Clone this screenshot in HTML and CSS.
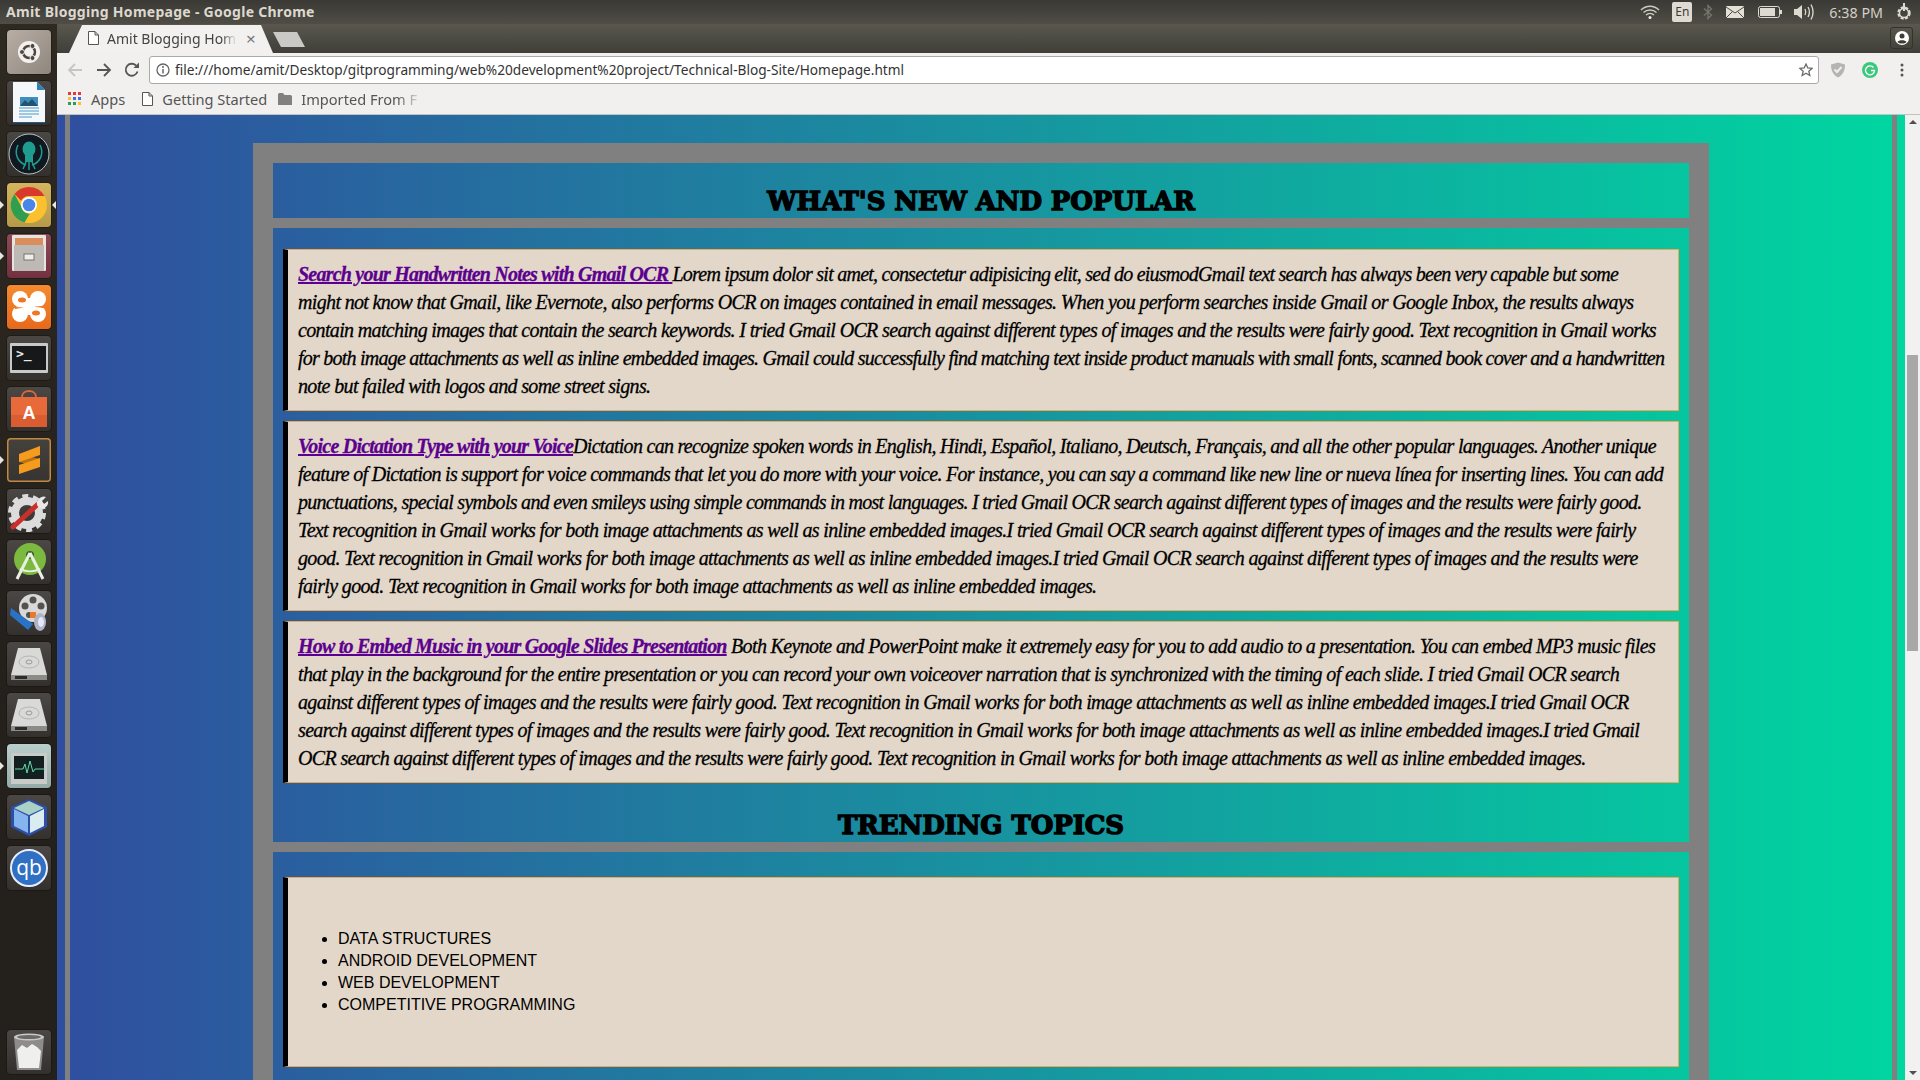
FILE: index.html
```html
<!DOCTYPE html>
<html lang="en">
<head>
  <meta charset="UTF-8">
  <title>Amit Blogging Homepage - Google Chrome</title>
  <link rel="stylesheet" href="styles.css">
</head>
<body>
  <div class="topbar">
    <div class="win-title">Amit Blogging Homepage - Google Chrome</div>
    <div class="tray">
      <svg class="tray-wifi" width="20" height="16" viewBox="0 0 20 16"><g fill="none" stroke="#cfcbc2" stroke-width="1.4"><path d="M1 6c5-5 13-5 18 0"/><path d="M3.5 8.6c3.6-3.4 9.4-3.4 13 0"/><path d="M6 11c2.300-2 5.700-2 8 0"/></g><circle cx="10" cy="13.500" r="1.500" fill="#eee"/></svg>
      <span class="tray-lang">En</span>
      <svg class="tray-bt" width="10" height="16" viewBox="0 0 10 16"><path d="M1 4.500 8.500 11 5 14.500V1.500L8.500 5 1 11.500" fill="none" stroke="#77756d" stroke-width="1.300"/></svg>
      <svg class="tray-mail" width="18" height="12" viewBox="0 0 18 12"><rect width="18" height="12" rx="1" fill="#e4e0d8"/><path d="M0 1l9 6 9-6M0 12l6.500-6.500M18 12l-6.500-6.500" fill="none" stroke="#4a4841"/></svg>
      <svg class="tray-batt" width="24" height="12" viewBox="0 0 24 12"><rect x=".5" y=".5" width="21" height="11" rx="2" fill="none" stroke="#dedad2"/><rect x="2" y="2" width="15" height="8" fill="#dedad2"/><rect x="22" y="4" width="2" height="4" fill="#dedad2"/></svg>
      <svg class="tray-vol" width="20" height="18" viewBox="0 0 20 18"><path d="M0 6h3l5-4v14l-5-4H0z" fill="#dedad2"/><g fill="none" stroke="#dedad2" stroke-width="1.300"><path d="M11 6c1 2 1 4 0 6"/><path d="M14 4c1.700 3 1.700 7 0 10"/><path d="M17 1.500c2.500 4.500 2.500 10.500 0 15"/></g></svg>
      <span class="tray-time">6:38 PM</span>
      <svg class="tray-power" width="16" height="18" viewBox="0 0 16 18"><circle cx="8" cy="10" r="5.500" fill="none" stroke="#dedad2" stroke-width="2.400" stroke-dasharray="3 1.400"/><circle cx="8" cy="10" r="4.500" fill="none" stroke="#dedad2" stroke-width="1.400"/><rect x="7" y="0" width="2" height="8" fill="#dedad2"/></svg>
    </div>
  </div>

  <div class="desktop">
    <nav class="launcher">
      <div class="tile tile-ubuntu"><svg width="44" height="44" viewBox="0 0 44 44"><circle cx="22" cy="22" r="11" fill="#f3f1ef"/><circle cx="22" cy="22" r="6" fill="none" stroke="#4d463f" stroke-width="2.500"/><g fill="#4d463f" stroke="#f3f1ef"><circle cx="15" cy="22" r="2.500"/><circle cx="25.500" cy="16" r="2.500"/><circle cx="25.500" cy="28" r="2.500"/></g></svg></div>
      <div class="tile"><svg width="44" height="44" viewBox="0 0 44 44"><path d="M6 1h24l8 8v33H6z" fill="#f4f8fb"/><path d="M30 1l8 8h-8z" fill="#2d7fb5"/><path d="M6 41h32v1H6z" fill="#1c5f8f"/><rect x="13" y="16" width="18" height="9" fill="#3d8fc0"/><path d="M13 25l5-6 3 3 4-4 6 7z" fill="#24536e"/><g stroke="#4a9ac8"><path d="M12 27h20M12 30h20M12 33h20M12 36h13"/></g></svg></div>
      <div class="tile"><svg width="44" height="44" viewBox="0 0 44 44"><circle cx="22" cy="22" r="20" fill="#10191f" stroke="#b9c2c4"/><g fill="#1f9c90"><ellipse cx="22" cy="17" rx="6.500" ry="7.500"/><rect x="18" y="22" width="8" height="8"/></g><g fill="none" stroke="#1f9c90" stroke-width="1.500"><path d="M11 13c-4 8-1 17 8 20M33 13c4 8 1 17-8 20"/><path d="M19 30l-3 7M22 30v8M25 30l3 7"/></g></svg></div>
      <div class="tile tile-chrome"><svg width="44" height="44" viewBox="0 0 44 44"><circle cx="22" cy="22" r="18" fill="#fbc02d"/><path d="M22 4a18 18 0 0 1 15.600 9H22a9 9 0 0 0-8 4.800L7.500 11A18 18 0 0 1 22 4z" fill="#d9392d"/><path d="M7.500 11l7 13a9 9 0 0 0 8 7l-5 8.500A18 18 0 0 1 7.500 11z" fill="#2f9e4f"/><circle cx="22" cy="22" r="8" fill="#fff"/><circle cx="22" cy="22" r="6.300" fill="#4a86e8"/></svg></div>
      <div class="tile tile-files"><svg width="44" height="44" viewBox="0 0 44 44"><rect x="5" y="1" width="34" height="36" rx="1" fill="#e6e4e1"/><rect x="8" y="4" width="28" height="7" fill="#d98e5c"/><rect x="7" y="11" width="30" height="26" fill="#bdbab6"/><rect x="17" y="20" width="10" height="6" fill="#f0eeec" stroke="#77736e"/></svg></div>
      <div class="tile tile-xampp"><svg width="44" height="44" viewBox="0 0 44 44"><g fill="#fff"><circle cx="13" cy="14" r="8"/><circle cx="31" cy="14" r="8"/><circle cx="13" cy="29" r="8"/><circle cx="31" cy="29" r="8"/><rect x="13" y="13" width="18" height="17"/></g><g fill="#f0761f"><ellipse cx="15" cy="15" rx="4" ry="2.500"/><ellipse cx="29" cy="28" rx="4" ry="2.500"/><path d="M8 22l9 .5-9 1.500zM36 21l-9 .5 9 1.500z"/></g></svg></div>
      <div class="tile"><svg width="44" height="44" viewBox="0 0 44 44"><rect x="3" y="7" width="38" height="30" rx="1" fill="#c9c9c7"/><rect x="5" y="10" width="34" height="24" fill="#17181a"/><text class="term-text" x="9" y="22">&gt;_</text></svg></div>
      <div class="tile"><svg width="44" height="44" viewBox="0 0 44 44"><path d="M15 10c0-8 14-8 14 0" fill="none" stroke="#d9683a" stroke-width="2"/><path d="M4 10h36v30H4z" fill="#e8693a"/><path d="M4 28h36v12H4z" fill="#d95d30"/><text class="soft-text" x="22" y="32">A</text></svg></div>
      <div class="tile tile-sublime"><svg width="44" height="44" viewBox="0 0 44 44"><path d="M12 16v8l21 5v-8z" fill="#b9720f"/><path d="M33 8v9l-21 7v-8z" fill="#f59b1f"/><path d="M33 20v9l-21 7v-9z" fill="#f59b1f"/></svg></div>
      <div class="tile"><svg width="44" height="44" viewBox="0 0 44 44"><circle cx="20" cy="24" r="12" fill="none" stroke="#dcdcdc" stroke-width="8"/><circle cx="20" cy="24" r="17" fill="none" stroke="#dcdcdc" stroke-width="4" stroke-dasharray="6 4.700"/><path d="M6 38l24-22" stroke="#c9302c" stroke-width="5" stroke-linecap="round"/><path d="M30 16c-1-6 5-10 9-8l-4 4 2 3 4-3c1 5-4 9-9 7z" fill="#e8e8e8"/></svg></div>
      <div class="tile"><svg width="44" height="44" viewBox="0 0 44 44"><circle cx="23" cy="19" r="16" fill="#7cb93f"/><circle cx="23" cy="15" r="4" fill="#3d5f2b"/><path d="M23 13L10 39M23 13l13 26" stroke="#e8f0e0" stroke-width="3"/><path d="M13 29c6 3 14 3 20 0" fill="none" stroke="#e8f0e0" stroke-width="2"/></svg></div>
      <div class="tile"><svg width="44" height="44" viewBox="0 0 44 44"><circle cx="26" cy="17" r="14" fill="#d8d8d8"/><g fill="#55514c"><circle cx="26" cy="9" r="3.500"/><circle cx="18" cy="15" r="3.500"/><circle cx="34" cy="15" r="3.500"/><circle cx="22" cy="24" r="3"/></g><path d="M4 17l22 16-5 6L3 24z" fill="#2a72c4"/><rect x="23" y="21" width="6" height="6" fill="#e8792b"/><ellipse cx="33" cy="31" rx="6" ry="9" fill="#aeb3c8"/><ellipse cx="34" cy="31" rx="3" ry="5" fill="#e4e8f8"/></svg></div>
      <div class="tile"><svg width="44" height="44" viewBox="0 0 44 44"><path d="M11 6h22l7 27H4z" fill="#d9d9d7"/><path d="M4 33h36v5H4z" fill="#8b8b88"/><path d="M8 34h12v3H8z" fill="#2b2b2b"/><ellipse cx="22" cy="20" rx="10" ry="6" fill="none" stroke="#b5b5b3"/><ellipse cx="22" cy="20" rx="3" ry="2" fill="none" stroke="#999"/></svg></div>
      <div class="tile"><svg width="44" height="44" viewBox="0 0 44 44"><path d="M11 6h22l7 27H4z" fill="#d9d9d7"/><path d="M4 33h36v5H4z" fill="#8b8b88"/><path d="M8 34h12v3H8z" fill="#2b2b2b"/><ellipse cx="22" cy="20" rx="10" ry="6" fill="none" stroke="#b5b5b3"/><ellipse cx="22" cy="20" rx="3" ry="2" fill="none" stroke="#999"/></svg></div>
      <div class="tile tile-monitor"><svg width="44" height="44" viewBox="0 0 44 44"><rect x="4" y="9" width="36" height="31" fill="#c9cbc9"/><rect x="7" y="12" width="30" height="23" fill="#12211f"/><path d="M8 25h8l2-5 2 9 3-12 3 11 2-3h10" fill="none" stroke="#62d9ae" stroke-width="1"/></svg></div>
      <div class="tile"><svg width="44" height="44" viewBox="0 0 44 44"><path d="M22 4l18 8v20l-18 9-18-9V12z" fill="#2c4fa8"/><path d="M22 6l15 7-15 7-15-7z" fill="#a9d2c5"/><path d="M7 14l14 7v17L7 31z" fill="#86b4ee"/><path d="M37 14l-14 7v17l14-7z" fill="#d9ecef"/></svg></div>
      <div class="tile"><svg width="44" height="44" viewBox="0 0 44 44"><circle cx="22" cy="22" r="18" fill="#2f6fc4" stroke="#e8eefc" stroke-width="2"/><text class="qb-text" x="22" y="29">qb</text></svg></div>
      <div class="launcher-fill"></div>
      <div class="tile"><svg width="44" height="44" viewBox="0 0 44 44"><path d="M7 7h30l-3 33H10z" fill="#8d8c8a"/><ellipse cx="22" cy="7" rx="15" ry="3.500" fill="#c9c9c7"/><ellipse cx="22" cy="7" rx="12" ry="2" fill="#6b6a68"/><path d="M10 20l5-5 5 3 5-4 5 3 4 4-2 17H12z" fill="#efefed"/></svg></div>
      <span class="pip pip-left pip-chrome"></span>
      <span class="pip pip-right pip-chrome"></span>
      <span class="pip pip-left pip-files"></span>
      <span class="pip pip-left pip-sublime"></span>
      <span class="pip pip-left pip-monitor"></span>
    </nav>

    <div class="browser">
      <div class="tabstrip">
        <div class="tab">
          <svg width="11" height="14" viewBox="0 0 11 14"><path d="M.5.500h6.500l3.500 3.500v9.500H.5zM7 .5V4h3.500" fill="#fff" stroke="#555"/></svg>
          <span class="tab-title">Amit Blogging Hom</span>
          <span class="tab-close">×</span>
        </div>
        <div class="newtab"></div>
        <div class="profile"><svg width="14" height="14" viewBox="0 0 14 14"><circle cx="7" cy="7" r="7" fill="#fff"/><circle cx="7" cy="5" r="2.500" fill="#3c3b36"/><path d="M2.500 11c1-2.500 8-2.500 9 0-2 2-7 2-9 0z" fill="#3c3b36"/></svg></div>
      </div>

      <div class="toolbar">
        <svg class="nav-btn" width="16" height="14" viewBox="0 0 16 14"><path d="M15 7H2M8 1L2 7l6 6" fill="none" stroke="#c6c5c3" stroke-width="1.800"/></svg>
        <svg class="nav-btn" width="16" height="14" viewBox="0 0 16 14"><path d="M1 7h13M8 1l6 6-6 6" fill="none" stroke="#555" stroke-width="1.800"/></svg>
        <svg class="nav-btn" width="16" height="16" viewBox="0 0 16 16"><path d="M13.500 9.500A6 6 0 1 1 12 3.500" fill="none" stroke="#555" stroke-width="1.800"/><path d="M9.500 6H15V.5z" fill="#555"/></svg>
        <div class="omnibox">
          <svg width="14" height="14" viewBox="0 0 14 14"><circle cx="7" cy="7" r="6" fill="none" stroke="#666" stroke-width="1.300"/><path d="M7 6v4.500" stroke="#666" stroke-width="1.500"/><circle cx="7" cy="4" r="1" fill="#666"/></svg>
          <span class="url">file:///home/amit/Desktop/gitprogramming/web%20development%20project/Technical-Blog-Site/Homepage.html</span>
          <svg width="14" height="14" viewBox="0 0 14 14"><path d="M7 1l1.800 4 4.200.4-3.200 2.800 1 4.300L7 10.200 3.200 12.500l1-4.300L1 5.400 5.200 5z" fill="none" stroke="#6b6b6b" stroke-width="1.300"/></svg>
        </div>
        <svg class="ext-shield" width="16" height="16" viewBox="0 0 16 16"><path d="M1 2.500L8 .5l7 2c0 6-2 10.500-7 13-5-2.500-7-7-7-13z" fill="#b4b4b4"/><path d="M4.500 7.500L7 10l4.500-5" fill="none" stroke="#eee" stroke-width="2"/></svg>
        <svg class="ext-grammarly" width="16" height="16" viewBox="0 0 16 16"><circle cx="8" cy="8" r="8" fill="#3bc87c"/><path d="M11.500 5.500A4.500 4.500 0 1 0 12.500 8.500H9" fill="none" stroke="#fff" stroke-width="1.300"/></svg>
        <svg class="ext-menu" width="4" height="14" viewBox="0 0 4 14"><g fill="#555"><circle cx="2" cy="2" r="1.500"/><circle cx="2" cy="7" r="1.500"/><circle cx="2" cy="12" r="1.500"/></g></svg>
      </div>

      <div class="bookmarks">
        <svg class="bm-apps" width="13" height="13" viewBox="0 0 13 13"><g><rect width="3" height="3" fill="#e53935"/><rect x="5" width="3" height="3" fill="#e53935"/><rect x="10" width="3" height="3" fill="#e53935"/><rect y="5" width="3" height="3" fill="#fbc02d"/><rect x="5" y="5" width="3" height="3" fill="#3f6fd8"/><rect x="10" y="5" width="3" height="3" fill="#3f6fd8"/><rect y="10" width="3" height="3" fill="#2f9e4f"/><rect x="5" y="10" width="3" height="3" fill="#2f9e4f"/><rect x="10" y="10" width="3" height="3" fill="#fbc02d"/></g></svg>
        <span class="bm-label bm-label-apps">Apps</span>
        <svg class="bm-page" width="11" height="14" viewBox="0 0 11 14"><path d="M.5.500h6.500l3.500 3.500v9.500H.5zM7 .5V4h3.500" fill="#fff" stroke="#555"/></svg>
        <span class="bm-label bm-label-start">Getting Started</span>
        <svg class="bm-folder" width="14" height="12" viewBox="0 0 14 12"><path d="M0 1.500A1.500 1.500 0 0 1 1.500 0H5l1.500 2h6A1.500 1.500 0 0 1 14 3.500V12H0z" fill="#808080"/></svg>
        <span class="bm-label bm-label-imported">Imported From F</span>
      </div>

      <div class="viewport">
        <div class="page">
          <div class="outer">
            <main class="frame">
              <header class="head">
                <h2>WHAT'S NEW AND POPULAR</h2>
              </header>
              <section class="block">
                <article class="post">
                  <a href="#">Search your Handwritten Notes with Gmail OCR </a><span class="tight">Lorem ipsum dolor sit amet, consectetur adipisicing elit, sed do eiusmodGmail text search has always been very capable but some</span><br>
                  might not know that Gmail, like Evernote, also performs OCR on images contained in email messages. When you perform searches inside Gmail or Google Inbox, the results always<br>
                  contain matching images that contain the search keywords. I tried Gmail OCR search against different types of images and the results were fairly good. Text recognition in Gmail works<br>
                  <span class="tight">for both image attachments as well as inline embedded images. Gmail could successfully find matching text inside product manuals with small fonts, scanned book cover and a handwritten</span><br>
                  note but failed with logos and some street signs.
                </article>
                <article class="post">
                  <a href="#">Voice Dictation Type with your Voice</a><span class="snug">Dictation can recognize spoken words in English, Hindi, Español, Italiano, Deutsch, Français, and all the other popular languages. Another unique</span><br>
                  <span class="snug">feature of Dictation is support for voice commands that let you do more with your voice. For instance, you can say a command like new line or nueva línea for inserting lines. You can add</span><br>
                  <span class="snug">punctuations, special symbols and even smileys using simple commands in most languages. I tried Gmail OCR search against different types of images and the results were fairly good.</span><br>
                  Text recognition in Gmail works for both image attachments as well as inline embedded images.I tried Gmail OCR search against different types of images and the results were fairly<br>
                  good. Text recognition in Gmail works for both image attachments as well as inline embedded images.I tried Gmail OCR search against different types of images and the results were<br>
                  fairly good. Text recognition in Gmail works for both image attachments as well as inline embedded images.
                </article>
                <article class="post">
                  <a href="#">How to Embed Music in your Google Slides Presentation</a> Both Keynote and PowerPoint make it extremely easy for you to add audio to a presentation. You can embed MP3 music files<br>
                  that play in the background for the entire presentation or you can record your own voiceover narration that is synchronized with the timing of each slide. I tried Gmail OCR search<br>
                  against different types of images and the results were fairly good. Text recognition in Gmail works for both image attachments as well as inline embedded images.I tried Gmail OCR<br>
                  search against different types of images and the results were fairly good. Text recognition in Gmail works for both image attachments as well as inline embedded images.I tried Gmail<br>
                  OCR search against different types of images and the results were fairly good. Text recognition in Gmail works for both image attachments as well as inline embedded images.
                </article>
                <h2 class="trending">TRENDING TOPICS</h2>
              </section>
              <section class="block block-topics">
                <div class="post post-topics">
                  <ul>
                    <li>DATA STRUCTURES</li>
                    <li>ANDROID DEVELOPMENT</li>
                    <li>WEB DEVELOPMENT</li>
                    <li>COMPETITIVE PROGRAMMING</li>
                  </ul>
                </div>
              </section>
            </main>
          </div>
        </div>
        <div class="scrollbar">
          <span class="arrow-up"></span>
          <div class="thumb"></div>
          <span class="arrow-down"></span>
        </div>
      </div>
    </div>
  </div>
</body>
</html>
```

FILE: styles.css
```css
* {
  box-sizing: border-box;
}
html, body {
  height: 100%;
}
body {
  margin: 0;
  overflow: hidden;
  display: flex;
  flex-direction: column;
  font-family: "Noto Sans", sans-serif;
  background-color: #24201c;
}

/* desktop top bar */
.topbar {
  height: 24px;
  flex: none;
  display: flex;
  align-items: center;
  justify-content: space-between;
  background: linear-gradient(#3a3935, #4f4d45);
}
.win-title {
  margin-left: 6px;
  padding-bottom: 2px;
  font-size: 14px;
  font-weight: 700;
  letter-spacing: 0.280px;
  color: #dcd8cf;
}
.tray {
  display: flex;
  align-items: center;
  color: #dcd8cf;
}
.tray-wifi { margin-right: 12px; }
.tray-lang {
  width: 20px;
  height: 20px;
  margin-right: 11px;
  border-radius: 2px;
  background-color: #dfdbd3;
  color: #3c3b37;
  font-size: 12px;
  line-height: 20px;
  text-align: center;
}
.tray-bt { margin-right: 13px; }
.tray-mail { margin-right: 14px; }
.tray-batt { margin-right: 12px; }
.tray-vol { margin-right: 15px; }
.tray-time {
  margin-right: 13px;
  font-size: 14.300px;
  color: #d4d0c8;
}
.tray-power { margin-right: 8px; }

.desktop {
  flex: 1;
  min-height: 0;
  display: flex;
}

/* launcher */
.launcher {
  position: relative;
  width: 57px;
  flex: none;
  display: flex;
  flex-direction: column;
  align-items: center;
  gap: 7px;
  padding-top: 6px;
  padding-bottom: 6px;
  background: linear-gradient(#2e2921, #2a251e 300px, #24201c 640px);
}
.launcher-fill {
  flex: 1;
}
.tile {
  width: 44px;
  height: 44px;
  flex: none;
  border-radius: 4px;
  background: linear-gradient(#4a4744, #33302d);
  box-shadow: 0 0 0 1px rgba(0, 0, 0, 0.25);
  overflow: hidden;
}
.tile svg {
  display: block;
}
.tile-ubuntu { background: linear-gradient(135deg, #b8aea6, #8f867e); }
.tile-chrome { background: linear-gradient(#d3b55f, #b79a48); }
.tile-files { background: linear-gradient(#8d4b58, #73303f); }
.tile-xampp { background: linear-gradient(#f58a2e, #e8691c); }
.tile-sublime {
  background: linear-gradient(#45423e, #363330);
  box-shadow: inset 0 0 0 1.500px #c08a45;
}
.tile-monitor { background: linear-gradient(#b9cfcb, #93aaa6); }
.term-text {
  font-family: "DejaVu Sans Mono", monospace;
  font-size: 13px;
  font-weight: 700;
  fill: #e8e8e8;
}
.soft-text {
  font-family: "Liberation Sans", sans-serif;
  font-size: 18px;
  font-weight: 700;
  fill: #fff;
  text-anchor: middle;
}
.qb-text {
  font-family: "Open Sans", sans-serif;
  font-size: 21px;
  fill: #fff;
  text-anchor: middle;
}
.pip {
  position: absolute;
  width: 0;
  height: 0;
  border-top: 4px solid transparent;
  border-bottom: 4px solid transparent;
}
.pip-left {
  left: 0;
  border-left: 4px solid #e8e6e2;
}
.pip-right {
  right: 1px;
  border-right: 4px solid #e8e6e2;
}
.pip-chrome { top: 177px; }
.pip-files { top: 228px; }
.pip-sublime { top: 432px; }
.pip-monitor { top: 738px; }

/* chrome window */
.browser {
  flex: 1;
  min-width: 0;
  display: flex;
  flex-direction: column;
}
.tabstrip {
  position: relative;
  height: 29px;
  flex: none;
  display: flex;
  align-items: flex-end;
  padding-left: 12px;
  background: linear-gradient(#5a584e, #3f3e38);
}
.tab {
  width: 204px;
  height: 28px;
  display: flex;
  align-items: center;
  padding-left: 19px;
  padding-bottom: 2px;
  background-color: #f2f1ef;
  clip-path: polygon(0 100%, 13px 0, 192px 0, 100% 100%);
  color: #444;
  font-size: 14px;
}
.tab-title {
  width: 130px;
  margin-left: 8px;
  overflow: hidden;
  white-space: nowrap;
  -webkit-mask-image: linear-gradient(to right, #000 88%, transparent);
  mask-image: linear-gradient(to right, #000 88%, transparent);
}
.tab-close {
  margin-left: 9px;
  color: #777;
  font-size: 17px;
}
.newtab {
  width: 32px;
  height: 15px;
  margin-bottom: 6px;
  background-color: #cac9c6;
  clip-path: polygon(0 0, 24px 0, 100% 100%, 8px 100%);
}
.profile {
  position: absolute;
  top: 3px;
  right: 7px;
  width: 23px;
  height: 22px;
  display: flex;
  align-items: center;
  justify-content: center;
  border: 1px solid #33322d;
  border-radius: 3px;
}
.toolbar {
  height: 33px;
  flex: none;
  display: flex;
  align-items: center;
  padding-left: 10px;
  background-color: #f1f0ee;
}
.nav-btn {
  margin-right: 13px;
}
.nav-btn + .nav-btn {
  margin-right: 12px;
}
.omnibox {
  width: 1670px;
  height: 28px;
  display: flex;
  align-items: center;
  margin-left: -3px;
  padding: 0 5px 0 6px;
  background-color: #fff;
  border: 1px solid #aaa;
  border-radius: 3px;
}
.url {
  flex: 1;
  margin-left: 5px;
  color: #333;
  font-size: 13.660px;
  white-space: nowrap;
}
.ext-shield { margin-left: 11px; }
.ext-grammarly { margin-left: 16px; }
.ext-menu { margin-left: 22px; }
.bookmarks {
  height: 29px;
  flex: none;
  display: flex;
  align-items: center;
  padding-left: 11px;
  padding-bottom: 3px;
  background-color: #f1f0ee;
  border-bottom: 1px solid #c4c3c0;
}
.bm-label {
  color: #555;
  font-size: 14.600px;
  white-space: nowrap;
}
.bm-label-apps { margin-left: 10px; }
.bm-page { margin-left: 17px; }
.bm-label-start { margin-left: 9px; }
.bm-folder { margin-left: 11px; }
.bm-label-imported {
  width: 122px;
  margin-left: 9px;
  overflow: hidden;
  -webkit-mask-image: linear-gradient(to right, #000 78%, transparent);
  mask-image: linear-gradient(to right, #000 78%, transparent);
}

/* page content */
.viewport {
  flex: 1;
  min-height: 0;
  display: flex;
}
.page {
  flex: 1;
  min-width: 0;
  overflow: hidden;
  padding: 0 8px;
  background: linear-gradient(to right, #304e9f, #00d6a0);
}
.outer {
  height: 100%;
  padding-top: 28px;
  border-left: 5px solid #808080;
  border-right: 5px solid #808080;
}
.frame {
  width: 1456px;
  margin: 0 auto;
  border: 20px solid #808080;
  border-bottom: 0;
}
.head {
  height: 55px;
  text-align: center;
}
h2 {
  margin: 0;
  font-family: "DejaVu Serif", serif;
  font-size: 26px;
  font-weight: 900;
  letter-spacing: -0.100px;
  line-height: 30px;
  color: #000;
  text-align: center;
  -webkit-text-stroke: 1.400px #000;
}
.head h2 {
  padding-top: 23px;
  line-height: 30px;
}
.block {
  padding: 21px 10px 0;
  border-top: 10px solid #808080;
}
.post {
  margin-bottom: 10px;
  padding: 10px;
  background-color: #e3d7c9;
  border: 1px solid #f4a54e;
  border-left: 5px solid #000;
  font-family: "Liberation Serif", serif;
  font-size: 20px;
  font-style: italic;
  letter-spacing: -0.650px;
  line-height: 28px;
  color: #000;
  white-space: nowrap;
  -webkit-text-stroke: 0.300px #000;
}
.post a {
  color: #5c0090;
  font-weight: 700;
  letter-spacing: -0.780px;
  -webkit-text-stroke: 0.300px #5c0090;
}
/* a few lines run long in the substitute font */
.tight {
  letter-spacing: -0.760px;
}
.snug {
  letter-spacing: -0.710px;
}
.trending {
  height: 49px;
  padding-top: 17px;
}
.block-topics {
  padding-top: 25px;
  padding-bottom: 60px;
}
.post-topics {
  height: 190px;
  margin: 0;
  font-family: "Liberation Sans", sans-serif;
  font-size: 16px;
  font-style: normal;
  letter-spacing: 0;
  line-height: 22px;
  -webkit-text-stroke: 0;
}
.post-topics ul {
  margin: 40px 0 0;
  padding-left: 40px;
}

/* scrollbar */
.scrollbar {
  position: relative;
  width: 15px;
  flex: none;
  background-color: #f1f1f1;
}
.thumb {
  position: absolute;
  top: 240px;
  left: 2px;
  width: 11px;
  height: 296px;
  background-color: #a8a8a8;
}
.arrow-up, .arrow-down {
  position: absolute;
  left: 4px;
  width: 0;
  height: 0;
  border-left: 4px solid transparent;
  border-right: 4px solid transparent;
}
.arrow-up {
  top: 5px;
  border-bottom: 4px solid #505050;
}
.arrow-down {
  bottom: 5px;
  border-top: 4px solid #505050;
}
```
